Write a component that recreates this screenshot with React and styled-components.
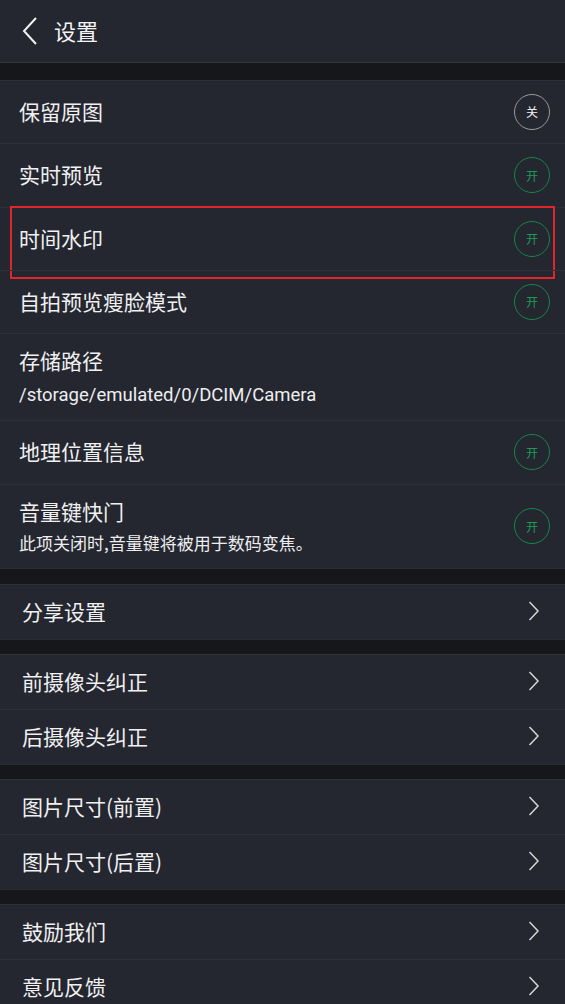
import React from 'react';
import styled, { createGlobalStyle } from 'styled-components';

const GlobalStyle = createGlobalStyle`
html, body {
    margin: 0;
    padding: 0;
    background: #16171b;
}
body {
    font-family: "Noto Sans CJK SC", Roboto, sans-serif;
    color: #f0f0f0;
}
`

const Page = styled.div`
width: 565px;
height: 1004px;
overflow: hidden;
background: #16171b;
`
const Header = styled.div`
height: 62px;
display: flex;
align-items: center;
background: #242630;
border-bottom: 1px solid #33353f;
padding-left: 22px;
`
const HeaderTitle = styled.div`
font-size: 22px;
margin-left: 16px;
padding-bottom: 2px;
color: #f4f4f4;
`
const Section = styled.div`
margin-top: ${p => p.gap}px;
border-top: 1px solid #30323b;
border-bottom: 1px solid #2a2c35;
background: #242630;
`
const Row = styled.div`
position: relative;
height: ${p => p.h}px;
box-sizing: border-box;
display: flex;
align-items: center;
justify-content: space-between;
padding: 0 ${p => p.pr}px 3px ${p => p.pl}px;
& + & {
    border-top: 1px solid #2d2f38;
}
`
const Texts = styled.div`
display: flex;
flex-direction: column;
`
const Title = styled.div`
font-size: 21px;
line-height: 28px;
color: #f0f0f0;
`
const Sub = styled.div`
font-size: ${p => p.latin ? 18.5 : 17}px;
font-family: ${p => p.latin ? 'Roboto, "Noto Sans CJK SC", sans-serif' : '"Noto Sans CJK SC", sans-serif'};
line-height: 22px;
margin-top: ${p => p.latin ? 10 : 7}px;
color: #eeeeee;
`
const Toggle = styled.div`
width: 34px;
height: 34px;
margin-top: 2px;
border-radius: 50%;
border: 1.5px solid ${p => p.on ? '#17874a' : '#9a9a9e'};
color: ${p => p.on ? '#1f9a55' : '#f2f2f2'};
font-size: 12px;
display: flex;
align-items: center;
justify-content: center;
flex-shrink: 0;
`
const Highlight = styled.div`
position: absolute;
left: 10px;
right: 10px;
top: -2px;
bottom: -9px;
border: 2.5px solid #e0262a;
pointer-events: none;
`

const Chevron = () => (
    <svg width="14" height="22" viewBox="0 0 14 22">
        <polyline points="2.5,2 11,11 2.5,20" fill="none" stroke="#d6d6d8" strokeWidth="1.5" />
    </svg>
)

const Back = () => (
    <svg width="16" height="28" viewBox="0 0 16 28">
        <polyline points="14,1 2,14 14,27" fill="none" stroke="#f2f2f2" strokeWidth="2" />
    </svg>
)

const toggles = [
    { title: '保留原图', on: false, h: 62 },
    { title: '实时预览', on: true, h: 64 },
    { title: '时间水印', on: true, h: 63, mark: true },
    { title: '自拍预览瘦脸模式', on: true, h: 63 },
    { title: '存储路径', sub: '/storage/emulated/0/DCIM/Camera', latin: true, h: 87 },
    { title: '地理位置信息', on: true, h: 64 },
    { title: '音量键快门', sub: '此项关闭时,音量键将被用于数码变焦。', on: true, h: 84 },
]

const groups = [
    ['分享设置'],
    ['前摄像头纠正', '后摄像头纠正'],
    ['图片尺寸(前置)', '图片尺寸(后置)'],
    ['鼓励我们', '意见反馈'],
]

const App = () => (
    <Page>
        <GlobalStyle />
        <Header>
            <Back />
            <HeaderTitle>设置</HeaderTitle>
        </Header>
        <Section gap={17}>
            {toggles.map(item => (
                <Row key={item.title} h={item.h} pl={19} pr={15}>
                    <Texts>
                        <Title>{item.title}</Title>
                        {item.sub && <Sub latin={item.latin}>{item.sub}</Sub>}
                    </Texts>
                    {item.on !== undefined && (
                        <Toggle on={item.on}>{item.on ? '开' : '关'}</Toggle>
                    )}
                    {item.mark && <Highlight />}
                </Row>
            ))}
        </Section>
        {groups.map((g, i) => (
            <Section key={i} gap={i === 0 ? 15 : 14}>
                {g.map((t, j) => (
                    <Row key={t} h={j === 0 ? 54 : 55} pl={22} pr={24}>
                        <Title>{t}</Title>
                        <Chevron />
                    </Row>
                ))}
            </Section>
        ))}
    </Page>
)

export default App
